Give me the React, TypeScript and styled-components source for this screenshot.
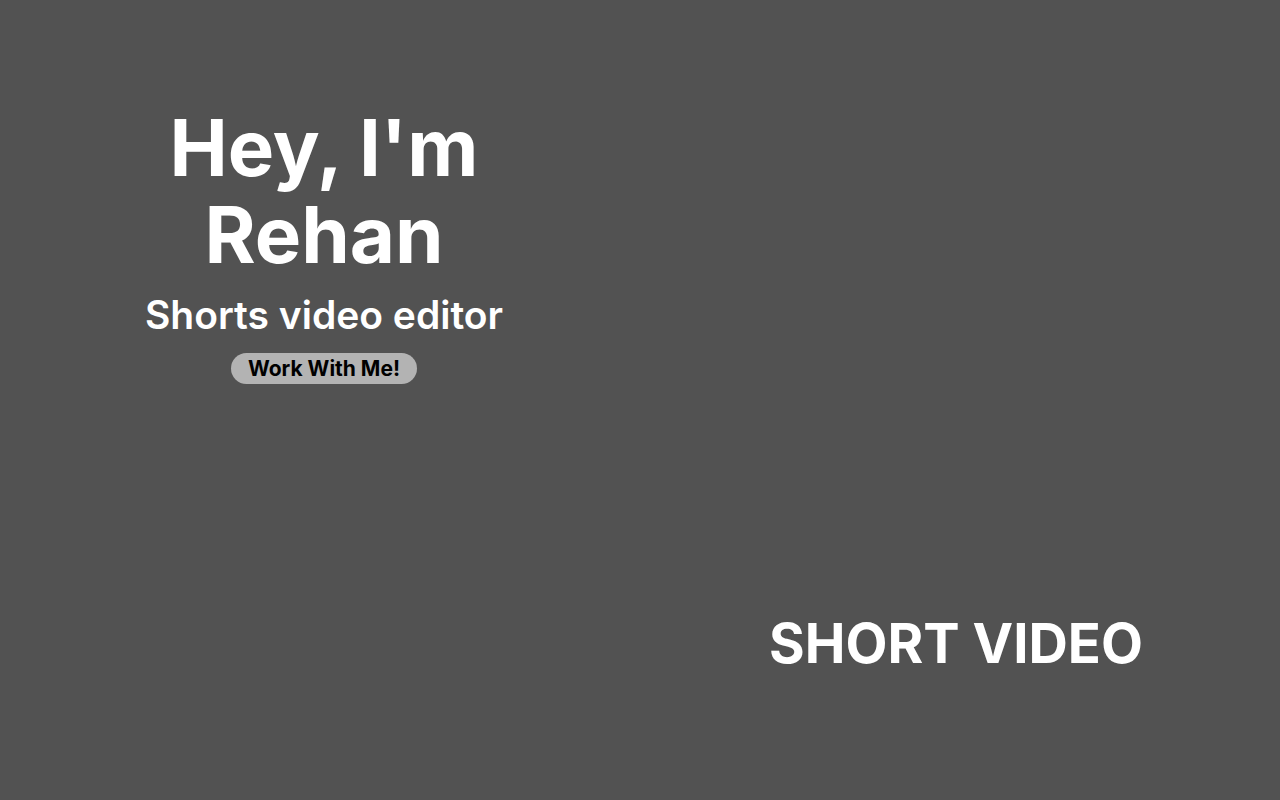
import styled, { createGlobalStyle } from "styled-components";

const GlobalStyle = createGlobalStyle`
  html, body {
    background: #525252;
    font-family: Inter, "Noto Sans", sans-serif;
    color: #ffffff;
  }
  body {
    margin: 8px;
  }
`;

const Page = styled.main`
  display: grid;
  grid-template-columns: 1fr 1fr;
  height: 784px;
`;

const Intro = styled.section`
  display: flex;
  flex-direction: column;
  align-items: center;
  text-align: center;
  padding-top: 96px;
`;

const Title = styled.h1`
  margin: 0;
  font-size: 78px;
  line-height: 87px;
  font-weight: 700;
`;

const Role = styled.h2`
  margin: 14px 0 0;
  font-size: 39px;
  line-height: 46px;
  font-weight: 600;
`;

const Cta = styled.button`
  margin-top: 15px;
  height: 31px;
  padding: 0 17px;
  border: none;
  border-radius: 16px;
  background: #b3b3b3;
  color: #000000;
  font-family: inherit;
  font-size: 21px;
  font-weight: 700;
  cursor: pointer;
`;

const Showcase = styled.section`
  display: flex;
  flex-direction: column;
  align-items: center;
  justify-content: flex-end;
  padding-bottom: 117px;
`;

const ShowcaseLabel = styled.h3`
  margin: 0;
  font-size: 54.5px;
  line-height: 64px;
  font-weight: 700;
`;

export default function App() {
  return (
    <>
      <GlobalStyle />
      <Page>
        <Intro>
          <Title>
            Hey, I'm
            <br />
            Rehan
          </Title>
          <Role>Shorts video editor</Role>
          <Cta>Work With Me!</Cta>
        </Intro>
        <Showcase>
          <ShowcaseLabel>SHORT VIDEO</ShowcaseLabel>
        </Showcase>
      </Page>
    </>
  );
}
